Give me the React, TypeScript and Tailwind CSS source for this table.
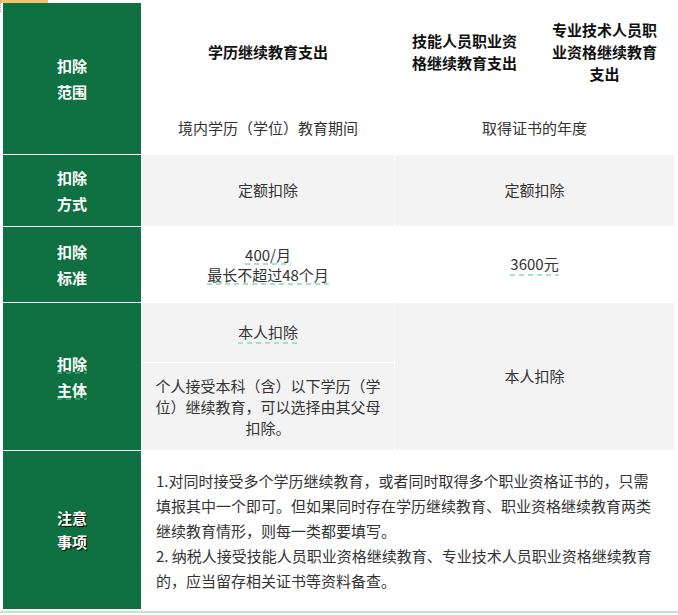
import React from 'react';

const Dash: React.FC<{ children: React.ReactNode }> = ({ children }) => (
  <span className="bg-[image:repeating-linear-gradient(90deg,#a3e2c4_0_5px,transparent_5px_9px)] bg-[length:100%_2px] bg-bottom bg-no-repeat">
    {children}
  </span>
);

const DarkDash: React.FC<{ children: React.ReactNode }> = ({ children }) => (
  <span className="bg-[image:repeating-linear-gradient(90deg,#2f9d63_0_5px,transparent_5px_9px)] bg-[length:100%_2px] bg-bottom bg-no-repeat">
    {children}
  </span>
);

const Label: React.FC<{ top: React.ReactNode; bottom: React.ReactNode }> = ({ top, bottom }) => (
  <div className="flex items-center justify-center bg-[#0f7141] text-center text-white font-bold">
    <div className="leading-[26px]">
      <div>{top}</div>
      <div>{bottom}</div>
    </div>
  </div>
);

const App: React.FC = () => {
  return (
    <div className="relative h-[615px] w-[678px] bg-white pt-[3px] text-[15px] text-[#333] [font-family:'Noto_Sans_CJK_SC','Noto_Sans',sans-serif]">
      <div className="absolute left-0 top-0 h-[3px] w-[48px] bg-[#f2c36b]" />
      <div className="absolute left-0 top-0 h-[12px] w-[2px] border-l border-dotted border-[#b5b5b5]" />

      <div className="ml-[3px] grid w-[671px] grid-cols-[138px_252px_139px_139px] grid-rows-[98px_52px_71px_75px_59px_87px_158px] gap-px bg-white">
        {/* 扣除范围 */}
        <div className="row-span-2 flex items-center justify-center bg-[#0f7141] text-center font-bold text-white">
          <div className="leading-[26px]">
            <div>扣除</div>
            <div>范围</div>
          </div>
        </div>
        <div className="flex items-center justify-center bg-white font-bold text-[#111]">学历继续教育支出</div>
        <div className="flex items-center justify-center bg-white px-[14px] text-center font-bold leading-[22px] text-[#111]">
          技能人员职业资格继续教育支出
        </div>
        <div className="flex items-center justify-center bg-white px-[14px] text-center font-bold leading-[22px] text-[#111]">
          专业技术人员职业资格继续教育支出
        </div>
        <div className="flex items-center justify-center bg-white">境内学历（学位）教育期间</div>
        <div className="col-span-2 flex items-center justify-center bg-white">取得证书的年度</div>

        {/* 扣除方式 */}
        <Label top="扣除" bottom="方式" />
        <div className="flex items-center justify-center bg-[#f3f3f3]">定额扣除</div>
        <div className="col-span-2 flex items-center justify-center bg-[#f3f3f3]">定额扣除</div>

        {/* 扣除标准 */}
        <Label top="扣除" bottom="标准" />
        <div className="flex items-center justify-center bg-white text-center leading-[20px]">
          <div>
            <div><Dash>400/月</Dash></div>
            <div><Dash>最长不超过48个月</Dash></div>
          </div>
        </div>
        <div className="col-span-2 flex items-center justify-center bg-white">
          <Dash>3600元</Dash>
        </div>

        {/* 扣除主体 */}
        <div className="row-span-2 flex items-center justify-center bg-[#0f7141] text-center font-bold text-white">
          <div className="leading-[26px]">
            <div><DarkDash>扣除</DarkDash></div>
            <div><DarkDash>主体</DarkDash></div>
          </div>
        </div>
        <div className="flex items-center justify-center bg-[#f3f3f3]">
          <Dash>本人扣除</Dash>
        </div>
        <div className="col-span-2 row-span-2 flex items-center justify-center bg-[#f3f3f3]">本人扣除</div>
        <div className="flex items-center justify-center bg-[#f3f3f3] px-[12px] text-center leading-[21px]">
          个人接受本科（含）以下学历（学位）继续教育，可以选择由其父母扣除。
        </div>

        {/* 注意事项 */}
        <div className="flex items-center justify-center bg-[#0f7141] text-center font-bold text-white">
          <div className="leading-[24px] [text-shadow:1px_1px_1px_#000]">
            <div>注意</div>
            <div>事项</div>
          </div>
        </div>
        <div className="col-span-3 flex items-center bg-white px-[14px] leading-[25px]">
          <div className="whitespace-nowrap">
            <div>1.对同时接受多个学历继续教育，或者同时取得多个职业资格证书的，只需</div>
            <div>填报其中一个即可。但如果同时存在学历继续教育、职业资格继续教育两类</div>
            <div>继续教育情形，则每一类都要填写。</div>
            <div>2. 纳税人接受技能人员职业资格继续教育、专业技术人员职业资格继续教育</div>
            <div>的，应当留存相关证书等资料备查。</div>
          </div>
        </div>
      </div>

      <div className="mt-[2px] h-[2px] w-full bg-[#c3e2d2]" />
    </div>
  );
};

export default App;
